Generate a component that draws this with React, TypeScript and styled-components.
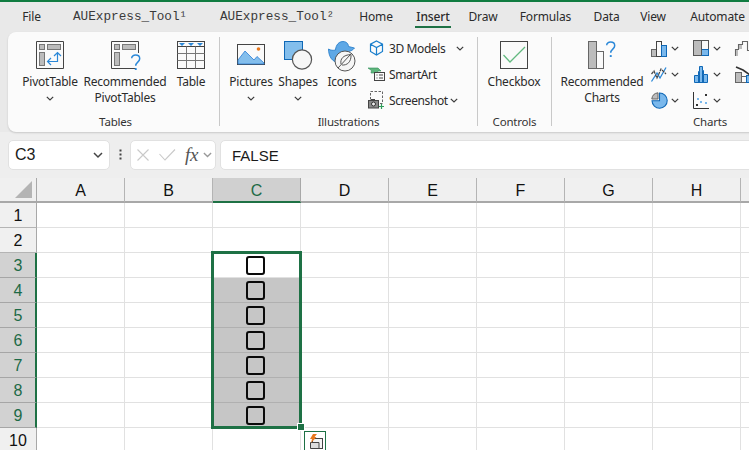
import React from "react";
import styled, { createGlobalStyle } from "styled-components";

const Global = createGlobalStyle`
  html, body { margin: 0; padding: 0; background: #e9e9e9; overflow: hidden; }
  * { box-sizing: border-box; }
`;

const UI = `"Noto Sans", "Open Sans", sans-serif`;
const GREEN = "#1e7145";

const Page = styled.div`
  position: relative;
  width: 749px;
  height: 450px;
  overflow: hidden;
  background: #eeeeee;
  display: flex;
  flex-direction: column;
  font-family: ${UI};
  color: #2b2b2b;
`;
const TitleZone = styled.div`
  background: #e9e9e9;
  height: 132px;
  flex: none;
  border-top: 2px solid #107c41;
`;
const Tabs = styled.div`
  height: 30px;
  display: flex;
  align-items: flex-start;
  white-space: nowrap;
`;
const Tab = styled.div<{ $x: number; $w: number; $active?: boolean }>`
  position: relative;
  flex: none;
  margin-left: ${(p) => p.$x}px;
  width: ${(p) => p.$w}px;
  height: 26px;
  line-height: 30px;
  font-size: 12px;
  letter-spacing: -0.15px;
  text-align: center;
  border-bottom: 2px solid ${(p) => (p.$active ? GREEN : "transparent")};
  font-weight: ${(p) => (p.$active ? 500 : 400)};
`;
const MonoTab = styled.div<{ $x: number }>`
  flex: none;
  margin-left: ${(p) => p.$x}px;
  width: 120px;
  line-height: 30px;
  font-family: "Liberation Mono", monospace;
  font-size: 12.7px;
  color: #3a3a3a;
`;
const Ribbon = styled.div`
  margin-left: 8px;
  width: 900px;
  height: 100px;
  background: #fbfbfb;
  border-radius: 8px 0 0 8px;
  box-shadow: 0 1px 2px rgba(0, 0, 0, 0.16);
  display: flex;
  align-items: stretch;
`;
const Group = styled.div<{ $w: number }>`
  flex: none;
  width: ${(p) => p.$w}px;
  display: flex;
  flex-direction: column;
`;
const GroupBody = styled.div<{ $pad?: number }>`
  height: 82px;
  display: flex;
  padding-left: ${(p) => p.$pad ?? 0}px;
`;
const GroupLabel = styled.div<{ $shift?: number }>`
  height: 16px;
  line-height: 16px;
  font-size: 11.5px;
  letter-spacing: -0.2px;
  text-align: center;
  color: #333;
  padding-left: ${(p) => p.$shift ?? 0}px;
`;
const Sep = styled.div`
  flex: none;
  width: 1px;
  margin: 5px 0 6px;
  background: #c9c9c9;
`;
const Large = styled.div<{ $w: number }>`
  flex: none;
  width: ${(p) => p.$w}px;
  padding-top: 9px;
  display: flex;
  flex-direction: column;
  align-items: center;
`;
const LargeIcon = styled.div`
  height: 28px;
  margin-bottom: 5px;
  display: flex;
  justify-content: center;
`;
const LargeLabel = styled.div`
  font-size: 12px;
  line-height: 16px;
  text-align: center;
  white-space: nowrap;
  letter-spacing: -0.22px;
`;
const ChevLine = styled.div`
  height: 16px;
  display: flex;
  align-items: center;
  justify-content: center;
`;
const SmallCol = styled.div`
  padding-top: 3px;
  margin-left: 4px;
  display: flex;
  flex-direction: column;
`;
const Small = styled.div`
  height: 26px;
  display: flex;
  align-items: center;
  font-size: 12px;
  white-space: nowrap;
  letter-spacing: -0.4px;
`;
const SmallIcon = styled.div`
  width: 17px;
  margin-right: 4px;
  display: flex;
  justify-content: center;
`;
const ChevAfter = styled.span<{ $gap: number }>`
  display: inline-flex;
  margin-left: ${(p) => p.$gap}px;
`;
const ChartGrid = styled.div`
  margin-left: 5px;
  padding-top: 3px;
  display: grid;
  grid-template-columns: repeat(3, 42px);
  grid-auto-rows: 26px;
`;
const ChartCell = styled.div`
  display: flex;
  align-items: center;
  gap: 4px;
`;

const Icon = styled.svg`
  display: block;
  flex: none;
  overflow: visible;
`;

const FormulaBar = styled.div`
  flex: none;
  margin-top: 8px;
  height: 30px;
  display: flex;
  align-items: stretch;
  padding-left: 8px;
`;
const fieldBox = `
  flex: none;
  background: #fff;
  border: 1px solid #e1e1e1;
  border-radius: 5px;
  display: flex;
  align-items: center;
`;
const NameBox = styled.div`
  ${fieldBox}
  width: 102px;
  padding: 0 6px 0 6px;
  justify-content: space-between;
  font-family: "Liberation Sans", sans-serif;
  font-size: 16px;
  color: #1a1a1a;
`;
const Dots = styled.div`
  flex: none;
  width: 20px;
  display: flex;
  justify-content: center;
  align-items: center;
`;
const FxBox = styled.div`
  ${fieldBox}
  width: 86px;
  padding-left: 6px;
`;
const FxText = styled.span`
  margin-left: 9px;
  margin-right: 5px;
  font-family: "Liberation Serif", serif;
  font-style: italic;
  font-size: 19px;
  letter-spacing: -0.2px;
  color: #555;
`;
const ValueBox = styled.div`
  ${fieldBox}
  margin-left: 4px;
  width: 600px;
  padding-left: 11px;
  font-family: "Liberation Sans", sans-serif;
  font-size: 15px;
  color: #1a1a1a;
`;

const Sheet = styled.div`
  position: relative;
  margin-top: 8px;
  flex: none;
  display: grid;
  grid-template-columns: 37px repeat(9, 88px);
  grid-template-rows: 25px;
  grid-auto-rows: 25px;
  background: #fff;
  font-family: "Liberation Sans", sans-serif;
  font-size: 16px;
`;
const Corner = styled.div`
  background: #f0f0f0;
  border-right: 1px solid #a8a8a8;
  border-bottom: 2px solid #a8a8a8;
  display: flex;
  align-items: flex-end;
  justify-content: flex-end;
  padding: 0 3px 2px 0;
`;
const ColHead = styled.div<{ $active?: boolean }>`
  background: ${(p) => (p.$active ? "#d0d0d0" : "#f0f0f0")};
  color: ${(p) => (p.$active ? "#1d6a46" : "#111")};
  border-right: 1px solid ${(p) => (p.$active ? "#a8a8a8" : "#b4b4b4")};
  border-bottom: 2px solid ${(p) => (p.$active ? GREEN : "#a8a8a8")};
  padding-top: 2px;
  display: flex;
  align-items: center;
  justify-content: center;
`;
const RowHead = styled.div<{ $active?: boolean }>`
  background: ${(p) => (p.$active ? "#d2d2d2" : "#f0f0f0")};
  color: ${(p) => (p.$active ? "#1d6a46" : "#111")};
  border-right: ${(p) => (p.$active ? `2px solid ${GREEN}` : "1px solid #a8a8a8")};
  border-bottom: 1px solid ${(p) => (p.$active ? "#a6a6a6" : "#b4b4b4")};
  display: flex;
  align-items: center;
  justify-content: center;
  padding-top: 2px;
  padding-left: ${(p) => (p.$active ? 1 : 0)}px;
`;
const Cell = styled.div<{ $filled?: boolean }>`
  background: ${(p) => (p.$filled ? "#c6c6c6" : "#fff")};
  border-right: 1px solid ${(p) => (p.$filled ? "#c6c6c6" : "#e1e1e1")};
  border-bottom: 1px solid ${(p) => (p.$filled ? "#b0b0b0" : "#e1e1e1")};
  display: flex;
  align-items: center;
  justify-content: center;
`;
const CheckBox = styled.div`
  width: 19px;
  height: 19px;
  margin-right: 3px;
  border: 2px solid #0a0a0a;
  border-radius: 3px;
  background: transparent;
`;
const Selection = styled.div`
  position: absolute;
  left: 211px;
  top: 73px;
  width: 91px;
  height: 178px;
  border: 3px solid ${GREEN};
  pointer-events: none;
`;
const Handle = styled.div`
  position: absolute;
  right: -6px;
  bottom: -5px;
  width: 6px;
  height: 6px;
  background: ${GREEN};
  border: 1px solid #fff;
  box-sizing: content-box;
`;
const QuickBtn = styled.div`
  position: absolute;
  left: 304px;
  top: 253px;
  width: 22px;
  height: 22px;
  background: #fff;
  border: 1px solid ${GREEN};
  padding: 2px 0 0 2px;
`;

/* icons */
const Chev = ({ c = "#3c3c3c", w = 8 }: { c?: string; w?: number }) => (
  <Icon width={w} height={(w * 5) / 8} viewBox="0 0 8 5">
    <path d="M0.8 0.8 L4 4 L7.2 0.8" fill="none" stroke={c} strokeWidth="1.2" />
  </Icon>
);
const PanelBase = ({ notch }: { notch?: boolean }) => (
  <>
    <path
      d={notch ? "M25 27.5 H0.5 V0.5 H27.5 V12" : "M0.5 0.5 H27.5 V27.5 H0.5 Z"}
      fill="#fafafa"
      stroke="#444"
      strokeWidth="1"
    />
    <rect x="3.5" y="3.5" width="5" height="5" fill="#bcbcbc" stroke="#777" />
    <rect x="11.5" y="3.5" width="13" height="5" fill="#bcbcbc" stroke="#777" />
    <rect x="3.5" y="11.5" width="5" height="13" fill="#bcbcbc" stroke="#777" />
  </>
);
const PivotIcon = () => (
  <Icon width="28" height="28" viewBox="0 0 28 28">
    <PanelBase />
    <path
      d="M21.5 12 V20.5 H11.5 M18 15 L21.5 11.5 L25 15 M15 17 L11.5 20.5 L15 24"
      fill="none"
      stroke="#2b88d8"
      strokeWidth="1.2"
    />
  </Icon>
);
const Question = ({ x, y, s = 1 }: { x: number; y: number; s?: number }) => (
  <g transform={`translate(${x} ${y}) scale(${s})`}>
    <path
      d="M0.7 3.8 C0.7 1.6 2.6 0.6 4.6 0.6 C6.9 0.6 8.7 2 8.7 4.2 C8.7 7.6 4.7 7.6 4.7 11.3"
      fill="none"
      stroke="#2b88d8"
      strokeWidth="1.5"
    />
    <rect x="3.8" y="13.6" width="1.9" height="1.9" fill="#2b88d8" />
  </g>
);
const RecPivotIcon = () => (
  <Icon width="28" height="28" viewBox="0 0 28 28">
    <PanelBase notch />
    <Question x={20} y={13.5} />
  </Icon>
);
const TableIcon = () => (
  <Icon width="28" height="28" viewBox="0 0 28 28">
    <rect x="0.5" y="0.5" width="27" height="27" fill="#fafafa" stroke="#444" />
    <path d="M0.5 5.5 H27.5" stroke="#444" />
    <path d="M0.5 12.5 H27.5 M0.5 19.5 H27.5 M9.5 5.5 V27.5 M18.5 5.5 V27.5" stroke="#777" />
    <path d="M2 2 H8 L5 5 Z M11 2 H17 L14 5 Z M20 2 H26 L23 5 Z" fill="#2b88d8" />
  </Icon>
);
const PicturesIcon = () => (
  <Icon width="28" height="28" viewBox="0 0 28 28">
    <rect x="0.5" y="3.5" width="27" height="20" fill="#fafafa" stroke="#444" />
    <path d="M1 19 L8 10 L17 19 L20 15.5 L27 22 V23 H1 Z" fill="#83beec" stroke="#2b7cd3" strokeWidth="0.8" />
    <circle cx="21.5" cy="8" r="1.8" fill="#e8781d" />
  </Icon>
);
const ShapesIcon = () => (
  <Icon width="28" height="28" viewBox="0 0 28 28">
    <rect x="0.5" y="0.5" width="18" height="18" fill="#83beec" stroke="#1068b6" />
    <circle cx="18" cy="18.5" r="9.6" fill="#f6f6f6" stroke="#555" strokeWidth="1.2" />
  </Icon>
);
const IconsIcon = () => (
  <Icon width="28" height="28" viewBox="0 0 28 28">
    <path
      d="M0.5 8 C3 9.5 5 9.5 7.5 9 C7.5 7 9 0.5 15 0.5 C19 0.5 20.5 3.5 20.5 5.5 L26.5 7 C25 9 23 10 20.5 10.5 C21 14 19 21 11 21.5 C4 21.5 0.5 15 0.5 8 Z"
      fill="#5ea8e6"
      stroke="#1f78c8"
      strokeWidth="0.8"
    />
    <circle cx="17" cy="20" r="10" fill="#f6f6f6" stroke="#555" strokeWidth="1" />
    <path d="M10 27 L22 14 M13 23 C12 18 15 14 23 13.5 C23.5 21 19 24.5 14 24" fill="none" stroke="#555" strokeWidth="1" />
  </Icon>
);
const CubeIcon = () => (
  <Icon width="15" height="16" viewBox="0 0 15 16">
    <path
      d="M7.5 1 L13.5 4.2 V11.5 L7.5 15 L1.5 11.5 V4.2 Z M1.5 4.2 L7.5 7.6 L13.5 4.2 M7.5 7.6 V15"
      fill="none"
      stroke="#1b7fcc"
      strokeWidth="1.2"
    />
  </Icon>
);
const SmartArtIcon = () => (
  <Icon width="17" height="14" viewBox="0 0 17 14">
    <path d="M0 1 H10 L13 4 H10 L9 6 H3 L3.5 3.5 Z" fill="#5fb57d" stroke="#2f8f57" strokeWidth="0.6" />
    <rect x="6.5" y="5.5" width="10" height="8" fill="#fafafa" stroke="#444" />
    <path d="M8.5 8 H9.5 M11 8 H15 M8.5 11 H9.5 M11 11 H15" stroke="#444" />
  </Icon>
);
const ScreenshotIcon = () => (
  <Icon width="17" height="18" viewBox="0 0 17 18">
    <rect x="2.5" y="0.5" width="12" height="12" fill="none" stroke="#666" strokeDasharray="2.5 1.5" />
    <rect x="0.5" y="9.5" width="10" height="7.5" fill="#8a8a8a" stroke="#444" />
    <rect x="3" y="8" width="4" height="2" fill="#444" />
    <circle cx="5.5" cy="13" r="2" fill="#eee" stroke="#333" />
    <path d="M13.5 13 V18 M11 15.5 H16" stroke="#2f9e5b" strokeWidth="1.2" />
  </Icon>
);
const CheckboxIcon = () => (
  <Icon width="28" height="28" viewBox="0 0 28 28">
    <rect x="0.5" y="0.5" width="27" height="27" fill="#fafafa" stroke="#444" />
    <path d="M3.5 14 L10 21 L25 6" fill="none" stroke="#62b97f" strokeWidth="1.3" />
  </Icon>
);
const RecChartsIcon = () => (
  <Icon width="28" height="28" viewBox="0 0 28 28">
    <rect x="0.5" y="0.5" width="8" height="27" fill="#bcbcbc" stroke="#666" />
    <rect x="8.5" y="10.5" width="7" height="17" fill="#fafafa" stroke="#666" />
    <Question x={18} y={0.5} />
  </Icon>
);
const ColumnChart = () => (
  <Icon width="16" height="17" viewBox="0 0 16 17">
    <rect x="0.5" y="9.5" width="5" height="7" fill="#bcbcbc" stroke="#666" />
    <rect x="5.5" y="1.5" width="5" height="15" fill="#fafafa" stroke="#444" />
    <rect x="10.5" y="5.5" width="5" height="11" fill="#7ab8ec" stroke="#1068b6" />
  </Icon>
);
const TreeChart = () => (
  <Icon width="16" height="17" viewBox="0 0 16 17">
    <rect x="0.5" y="0.5" width="15" height="15" fill="#fafafa" stroke="#555" />
    <rect x="1" y="1" width="7" height="14" fill="#bcbcbc" />
    <rect x="8.5" y="9.5" width="7" height="6" fill="#7ab8ec" stroke="#1068b6" />
    <path d="M8.5 0.5 V15.5" stroke="#555" />
  </Icon>
);
const WaterfallChart = () => (
  <Icon width="16" height="17" viewBox="0 0 16 17">
    <path d="M0.5 16 V9.5 H3.5 V4.5 H7.5 V1.5 H12.5 V10.5 H15.5" fill="#fafafa" stroke="#666" strokeWidth="1.1" />
    <rect x="1" y="10" width="2" height="6" fill="#bcbcbc" />
    <rect x="4" y="5" width="3" height="4" fill="#bcbcbc" />
  </Icon>
);
const LineChart = () => (
  <Icon width="16" height="17" viewBox="0 0 16 17">
    <path d="M0.5 15.5 L6 7 L9 12 L15 1.5" fill="none" stroke="#2b88d8" strokeWidth="1.3" />
    <path d="M0.5 8 L3 5 L6 12 L10 3 L15 8" fill="none" stroke="#444" strokeWidth="1.2" strokeDasharray="3 0.8" />
  </Icon>
);
const HistChart = () => (
  <Icon width="16" height="17" viewBox="0 0 16 17">
    <path
      d="M1.5 16.5 V9.5 H5.5 V5.5 H6.5 V0.5 H9.5 V4.5 H10.5 V8.5 H14.5 V16.5 Z M5.5 9.5 V16.5 M6.5 5.5 V16.5 M9.5 4.5 V16.5 M10.5 8.5 V16.5"
      fill="#7ab8ec"
      stroke="#1068b6"
    />
  </Icon>
);
const ComboChart = () => (
  <Icon width="16" height="17" viewBox="0 0 16 17">
    <rect x="0.5" y="6.5" width="6" height="10" fill="#bcbcbc" stroke="#666" />
    <rect x="6.5" y="10.5" width="5" height="6" fill="#fafafa" stroke="#666" />
    <rect x="11.5" y="9.5" width="5" height="7" fill="#7ab8ec" stroke="#1068b6" />
    <path d="M1 1 L8 4 L15 9" fill="none" stroke="#333" strokeWidth="1.6" />
  </Icon>
);
const PieChart = () => (
  <Icon width="16" height="17" viewBox="0 0 16 17">
    <path d="M8.5 1 A7.6 7.6 0 1 1 1 8.8 H8.5 Z" fill="#7ab8ec" stroke="#1068b6" strokeWidth="1.1" />
    <path d="M7 0.8 V7 H0.8 A7 7 0 0 1 7 0.8 Z" fill="#bcbcbc" stroke="#666" />
  </Icon>
);
const ScatterChart = () => (
  <Icon width="16" height="17" viewBox="0 0 16 17">
    <path d="M0.5 0 V16.5 H16" fill="none" stroke="#333" />
    <path d="M4 6 h2 v2 h-2 Z M7 9 h2 v2 h-2 Z M12 10 h2 v2 h-2 Z" fill="#7ab8ec" />
    <path d="M12 2 h2 v2 h-2 Z M3 12 h2 v2 h-2 Z" fill="#333" />
  </Icon>
);
const DotsIcon = () => (
  <Icon width="3" height="12" viewBox="0 0 3 12">
    <path d="M0.5 0.5 h2 v2 h-2 Z M0.5 4.5 h2 v2 h-2 Z M0.5 8.5 h2 v2 h-2 Z" fill="#444" />
  </Icon>
);
const CancelIcon = () => (
  <Icon width="12" height="12" viewBox="0 0 12 12">
    <path d="M0.5 0.5 L11.5 11.5 M11.5 0.5 L0.5 11.5" stroke="#c9c9c9" strokeWidth="1.1" />
  </Icon>
);
const EnterSlot = styled.span`
  display: inline-flex;
  margin-left: 10px;
`;
const EnterIcon = () => (
  <Icon width="17" height="12" viewBox="0 0 17 12">
    <path d="M0.5 5 L6 11 L16 0.5" fill="none" stroke="#c9c9c9" strokeWidth="1.1" />
  </Icon>
);
const QuickIcon = () => (
  <Icon width="17" height="16" viewBox="0 0 17 16">
    <rect x="5.5" y="4.5" width="10" height="10" fill="#f4f4f4" stroke="#444" />
    <path d="M3.5 8.5 H12 V14.5 H3.5 Z" fill="#ddd" stroke="#444" />
    <path d="M6 0 H10 L7.5 3 H9.5 L4 9 L5 5 H3 Z" fill="#e8781d" />
  </Icon>
);

const Triangle = () => (
  <Icon width="18" height="18" viewBox="0 0 18 18">
    <path d="M17 0 V17 H0 Z" fill="#b4b4b4" />
  </Icon>
);

const tabs: { label: string; x: number; w: number; active?: boolean }[] = [
  { label: "Home", x: 19, w: 34 },
  { label: "Insert", x: 22, w: 36, active: true },
  { label: "Draw", x: 16, w: 32 },
  { label: "Formulas", x: 19, w: 55 },
  { label: "Data", x: 19, w: 29 },
  { label: "View", x: 17, w: 30 },
  { label: "Automate", x: 20, w: 59 },
];
const cols = ["A", "B", "C", "D", "E", "F", "G", "H", ""];
const rows = [1, 2, 3, 4, 5, 6, 7, 8, 9, 10];

export default function App() {
  return (
    <Page>
      <Global />
      <TitleZone>
        <Tabs>
          <Tab $x={21} $w={21}>File</Tab>
          <MonoTab $x={31}>AUExpress_Tool¹</MonoTab>
          <MonoTab $x={27}>AUExpress_Tool²</MonoTab>
          {tabs.map((t) => (
            <Tab key={t.label} $x={t.x} $w={t.w} $active={t.active}>
              {t.label}
            </Tab>
          ))}
        </Tabs>
        <Ribbon>
          <Group $w={211}>
            <GroupBody $pad={11}>
              <Large $w={62}>
                <LargeIcon><PivotIcon /></LargeIcon>
                <LargeLabel>PivotTable</LargeLabel>
                <ChevLine><Chev /></ChevLine>
              </Large>
              <Large $w={88}>
                <LargeIcon><RecPivotIcon /></LargeIcon>
                <LargeLabel>Recommended<br />PivotTables</LargeLabel>
              </Large>
              <Large $w={44}>
                <LargeIcon><TableIcon /></LargeIcon>
                <LargeLabel>Table</LargeLabel>
              </Large>
            </GroupBody>
            <GroupLabel $shift={4}>Tables</GroupLabel>
          </Group>
          <Sep />
          <Group $w={257}>
            <GroupBody $pad={6}>
              <Large $w={50}>
                <LargeIcon><PicturesIcon /></LargeIcon>
                <LargeLabel>Pictures</LargeLabel>
                <ChevLine><Chev /></ChevLine>
              </Large>
              <Large $w={44}>
                <LargeIcon><ShapesIcon /></LargeIcon>
                <LargeLabel>Shapes</LargeLabel>
                <ChevLine><Chev /></ChevLine>
              </Large>
              <Large $w={44}>
                <LargeIcon><IconsIcon /></LargeIcon>
                <LargeLabel>Icons</LargeLabel>
              </Large>
              <SmallCol>
                <Small>
                  <SmallIcon><CubeIcon /></SmallIcon>
                  3D Models
                  <ChevAfter $gap={11}><Chev /></ChevAfter>
                </Small>
                <Small>
                  <SmallIcon><SmartArtIcon /></SmallIcon>
                  SmartArt
                </Small>
                <Small>
                  <SmallIcon><ScreenshotIcon /></SmallIcon>
                  Screenshot
                  <ChevAfter $gap={2}><Chev /></ChevAfter>
                </Small>
              </SmallCol>
            </GroupBody>
            <GroupLabel>Illustrations</GroupLabel>
          </Group>
          <Sep />
          <Group $w={73}>
            <GroupBody>
              <Large $w={72}>
                <LargeIcon><CheckboxIcon /></LargeIcon>
                <LargeLabel>Checkbox</LargeLabel>
              </Large>
            </GroupBody>
            <GroupLabel>Controls</GroupLabel>
          </Group>
          <Sep />
          <Group $w={316}>
            <GroupBody $pad={6}>
              <Large $w={88}>
                <LargeIcon><RecChartsIcon /></LargeIcon>
                <LargeLabel>Recommended<br />Charts</LargeLabel>
              </Large>
              <ChartGrid>
                <ChartCell><ColumnChart /><Chev /></ChartCell>
                <ChartCell><TreeChart /><Chev /></ChartCell>
                <ChartCell><WaterfallChart /><Chev /></ChartCell>
                <ChartCell><LineChart /><Chev /></ChartCell>
                <ChartCell><HistChart /><Chev /></ChartCell>
                <ChartCell><ComboChart /><Chev /></ChartCell>
                <ChartCell><PieChart /><Chev /></ChartCell>
                <ChartCell><ScatterChart /><Chev /></ChartCell>
              </ChartGrid>
            </GroupBody>
            <GroupLabel>Charts</GroupLabel>
          </Group>
        </Ribbon>
      </TitleZone>

      <FormulaBar>
        <NameBox>C3<Chev c="#444" w={10} /></NameBox>
        <Dots><DotsIcon /></Dots>
        <FxBox>
          <CancelIcon />
          <EnterSlot><EnterIcon /></EnterSlot>
          <FxText>fx</FxText>
          <Chev c="#999" w={9} />
        </FxBox>
        <ValueBox>FALSE</ValueBox>
      </FormulaBar>

      <Sheet>
        <Corner><Triangle /></Corner>
        {cols.map((c, i) => (
          <ColHead key={i} $active={c === "C"}>{c}</ColHead>
        ))}
        {rows.map((r) => {
          const sel = r >= 3 && r <= 9;
          return (
            <React.Fragment key={r}>
              <RowHead $active={sel}>{r}</RowHead>
              {cols.map((c, i) => {
                const inC = c === "C" && sel;
                return (
                  <Cell key={i} $filled={inC && r > 3}>
                    {inC && <CheckBox />}
                  </Cell>
                );
              })}
            </React.Fragment>
          );
        })}
        <Selection><Handle /></Selection>
        <QuickBtn><QuickIcon /></QuickBtn>
      </Sheet>
    </Page>
  );
}
